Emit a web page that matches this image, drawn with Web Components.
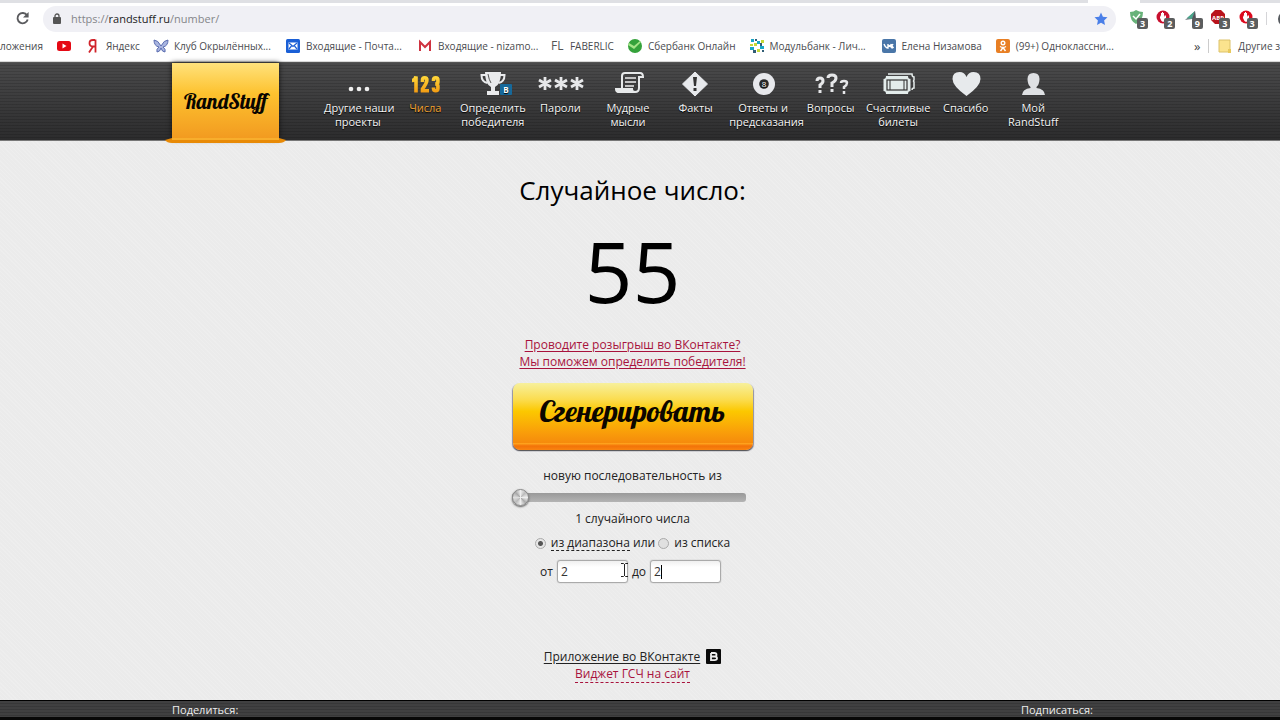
<!DOCTYPE html>
<html lang="ru">
<head>
<meta charset="utf-8">
<title>Случайное число — RandStuff</title>
<style>
  html, body { margin: 0; min-height: 100vh; }
  body {
    font-family: "Open Sans", "Noto Sans", sans-serif;
    color: #222;
    background: #ececec;
    overflow-x: hidden;
  }
</style>
</head>
<body>
<rs-page></rs-page>
<script>
const define = (name, html, setup) => customElements.define(name, class extends HTMLElement {
  connectedCallback() {
    if (this.shadowRoot) return;
    const root = this.attachShadow({ mode: 'open' });
    const t = document.createElement('template');
    t.innerHTML = html;
    root.append(t.content.cloneNode(true));
    if (setup) setup.call(this, root);
  }
});

/* Browser toolbar */
define('ext-icon', `
<style>
  :host { display: block; position: relative; width: 28px; height: 20px; }
  ::slotted(svg) { display: block; width: 16px; height: 16px; }
  b { position: absolute; left: 8px; top: 8px; width: 11px; height: 11px; border-radius: 2px;
      background: #5b5d5e; color: #fff; font: bold 9px/11px "Open Sans", sans-serif; text-align: center; }
</style>
<slot></slot><b></b>`, function (root) { root.querySelector('b').textContent = this.getAttribute('count'); });

define('browser-bar', `
<style>
  :host { display: block; background: #fff; }
  .strip { display: flex; justify-content: flex-end; height: 3px; background: #dfe0e4; }
  .strip i { width: 52px; margin-right: 140px; background: #fff; }
  .tools { display: flex; align-items: center; height: 31px; overflow: hidden; }
  button { border: 0; padding: 0; background: none; width: 43px; height: 24px; }
  button svg { display: block; margin-left: 15px; }
  .omni { flex: 1; min-width: 0; display: flex; align-items: center; height: 26px; border-radius: 13px; background: #f0f0f5; }
  .lock { margin: 0 9px; }
  .url { flex: 1; font-size: 11px; line-height: 16px; color: #85868a; }
  .url span { color: #222; }
  .star { margin-right: 8px; }
  .exts { display: flex; width: 150px; padding: 2px 0 0 13px; box-sizing: border-box; overflow: hidden; }
  .me { width: 14px; height: 17px; overflow: hidden; }
</style>
<div class="strip"><i></i></div>
<div class="tools">
  <button aria-label="Обновить"><svg width="15" height="15" viewBox="0 0 15 15"><path d="M12 4.2A5.2 5.2 0 1 0 12.7 8.6" fill="none" stroke="#5a5b5e" stroke-width="1.9"/><path d="M13.6 1v5.6H8z" fill="#5a5b5e"/></svg></button>
  <div class="omni">
    <svg class="lock" width="10" height="12" viewBox="0 0 10 12"><rect x="1" y="4" width="8" height="7" rx="1" fill="#555"/><path d="M3 5V3a2 2 0 0 1 4 0v2" fill="none" stroke="#555" stroke-width="1.3"/></svg>
    <div class="url">https://<span>randstuff.ru</span>/number/</div>
    <svg class="star" width="14" height="14" viewBox="0 0 14 14"><path d="M7 .5l1.9 4.3 4.6.5-3.4 3.1.9 4.7L7 10.700l-4 2.4.9-4.700L.5 5.300l4.600-.5z" fill="#4a7fe8"/></svg>
  </div>
  <div class="exts">
    <ext-icon count="3"><svg viewBox="0 0 16 16"><path d="M1 2q4 0 6-2 3 2 7 2 0 9-7 12Q1 11 1 2z" fill="#67b279"/><path d="M4 6l3 3 4-5" fill="none" stroke="#fff" stroke-width="1.500"/></svg></ext-icon>
    <ext-icon count="2"><svg viewBox="0 0 16 16"><circle cx="7" cy="7" r="6.500" fill="#c8102e"/><path d="M4 7l1-2v2V3h1v3V2h1v4V3h1v4l1-2 1 1v3q-1 3-3 3-2-1-3-4z" fill="#fff"/></svg></ext-icon>
    <ext-icon count="9"><svg viewBox="0 0 16 16"><path d="M1 10L11 1l1 10-4-2z" fill="#79858a"/><path d="M3 8l8-7-3 8z" fill="#49a68b"/><path d="M8 9l3-8 1 10z" fill="#54545c"/></svg></ext-icon>
    <ext-icon count="3"><svg viewBox="0 0 16 16"><path d="M4 0h6l4 4v6l-4 4H4l-4-4V4z" fill="#b9121b"/><text x="7" y="10" text-anchor="middle" font-family="Open Sans" font-weight="700" font-size="6" fill="#fff">ABP</text></svg></ext-icon>
    <ext-icon count="3"><svg viewBox="0 0 16 16"><circle cx="7" cy="7" r="6.500" fill="#dc0a1e"/><path d="M4 7l1-2v2V3h1v3V2h1v4V3h1v4l1-2 1 1v3q-1 3-3 3-2-1-3-4z" fill="#fff"/></svg></ext-icon>
  </div>
  <svg class="me" viewBox="0 0 14 17"><path d="M.5 2v13" stroke="#d5d5d8"/><circle cx="20" cy="9" r="8" fill="#55595e"/></svg>
</div>`);

/* Bookmarks */
define('book-mark', `
<style>
  :host { display: block; flex: none; }
  a { display: flex; align-items: center; gap: 5px; color: #4a4b4f; text-decoration: none; font-size: 10px; line-height: 16px; white-space: nowrap; }
  ::slotted(svg) { flex: none; width: 16px; height: 16px; }
  span:empty { display: none; }
  :host([cut]) span { width: 98px; }
</style>
<a href="#"><slot></slot><span></span></a>`, function (root) { root.querySelector('span').textContent = this.getAttribute('label') || ''; });

define('bookmarks-bar', `
<style>
  :host { display: flex; justify-content: space-between; height: 28px; padding-bottom: 3px; align-items: center; background: #fff; border-bottom: 1px solid #d8d8d8; box-sizing: border-box; overflow: hidden; }
  nav { display: flex; gap: 13px; align-items: center; }
  .rest { flex: none; width: 86px; gap: 8px; }
  .rest span { font-size: 13px; line-height: 16px; color: #444; }
  .rest i { width: 1px; height: 14px; background: #ccc; }
</style>
<nav>
  <book-mark label="ложения"></book-mark>
  <book-mark><svg viewBox="0 0 16 16"><rect x="1" y="3" width="14" height="10" rx="2.500" fill="#e50914"/><path d="M6.500 5.500v5l4-2.500z" fill="#fff"/></svg></book-mark>
  <book-mark label="Яндекс"><svg viewBox="0 0 16 16"><path d="M10.500 1.500v13M10 2H8Q4.500 2 4.500 5.300 4.500 8.500 8 8.500H10M8 8.500L4 14.500" fill="none" stroke="#d1232a" stroke-width="1.800"/></svg></book-mark>
  <book-mark cut label="Клуб Окрылённых..."><svg viewBox="0 0 16 16"><path d="M8 8Q5 2 1 2q0 6 5 7-3 2-2 5 3 0 4-4 1 4 4 4 1-3-2-5 5-1 5-7-4 0-7 6z" fill="#a9b5e0" stroke="#5b6db0" stroke-width="1"/></svg></book-mark>
  <book-mark cut label="Входящие - Почта..."><svg viewBox="0 0 16 16"><rect x="1" y="1" width="14" height="14" rx="1.500" fill="#1a5fd6"/><rect x="3.500" y="4.500" width="9" height="7" fill="#fff"/><path d="M4 5l4 3.500L12 5M4 11l2.500-3M12 11L9.500 8" fill="none" stroke="#1a5fd6" stroke-width="1.200"/></svg></book-mark>
  <book-mark cut label="Входящие - nizamo..."><svg viewBox="0 0 16 16"><path d="M3 13V4l5 5 5-5v9" fill="none" stroke="#cf3340" stroke-width="2"/></svg></book-mark>
  <book-mark label="FABERLIC"><svg viewBox="0 0 16 16"><text x="2" y="12" font-family="Open Sans" font-size="12" fill="#555">FL</text></svg></book-mark>
  <book-mark label="Сбербанк Онлайн"><svg viewBox="0 0 16 16"><circle cx="8" cy="8" r="7" fill="#35a23b"/><path d="M2 5l5 3 6-5 1 1-7 7-6-4z" fill="#a5e488"/></svg></book-mark>
  <book-mark cut label="Модульбанк - Лич..."><svg viewBox="0 0 16 16"><g fill="#18a7c7"><path d="M2 1h3v3H2zM8 3h3v3H8zM1 9h4v3H1zM11 8h4v3h-4z"/></g><g fill="#c5d936"><path d="M5 5h3v3H5zM12 2h3v3h-3zM8 11h3v3H8zM1 6h3v2H1z"/></g><path d="M11 5h2v3h-2zM4 12h3v3H4zM13 12h2v2h-2zM6 1h2v2H6z" fill="#315d76"/></svg></book-mark>
  <book-mark label="Елена Низамова"><svg viewBox="0 0 16 16"><rect x="1" y="1" width="14" height="14" rx="2" fill="#4a76a8"/><path d="M3 6q1.500 4 4 4V6M7.500 8Q10 8 10.500 6M7.500 8q2.500 0 4 2.500M12 6q-.5 1.500-2 2 1.500.5 2.500 2" fill="none" stroke="#fff" stroke-width="1.400"/></svg></book-mark>
  <book-mark cut label="(99+) Одноклассни..."><svg viewBox="0 0 16 16"><rect x="1" y="1" width="14" height="14" rx="2" fill="#e87f24"/><circle cx="8" cy="5" r="1.800" fill="none" stroke="#fff" stroke-width="1.400"/><path d="M5 8.500q3 2 6 0M8 9.500L5.500 13M8 9.500l2.500 3.500" fill="none" stroke="#fff" stroke-width="1.400"/></svg></book-mark>
</nav>
<nav class="rest"><span>»</span><i></i><book-mark label="Другие з"><svg viewBox="0 0 16 16"><path d="M2 2h11v12H2z" fill="#fbe38e" stroke="#dcc26a"/><path d="M11 11h3v4h-3z" fill="#e8c95c"/></svg></book-mark></nav>`);

/* Site header */
define('nav-item', `
<style>
  :host { display: block; }
  a { display: block; color: #f4f4f4; text-decoration: none; text-align: center; font-size: 11px; line-height: 14px; white-space: nowrap; text-shadow: 0 1px 1px #000; }
  .pic { display: flex; justify-content: center; height: 30px; padding-bottom: 2px; }
  ::slotted(svg) { display: block; width: 48px; height: 30px; }
  :host([active]) a { color: #f0a030; }
</style>
<a href="#"><div class="pic"><slot name="icon"></slot></div><slot></slot></a>`);

define('site-header', `
<style>
  :host { display: block; background: repeating-linear-gradient(#0000 0 2px, #0002 2px 3px), linear-gradient(#4a4a4b, #2c2c2d); border-top: 1px solid #555; border-bottom: 1px solid #777; box-sizing: border-box; height: 79px; padding-right: 15px; }
  .wrap { display: flex; max-width: 921px; margin: auto; }
  .logo { position: relative; flex: none; width: 107px; height: 76px; box-sizing: border-box; text-align: center; color: #090500; text-decoration: none;
    font: 21px/76px "Lobster", "Liberation Serif", serif; background: linear-gradient(#ffe27c, #fdc22f 40%, #f29a20); box-shadow: 0 0 5px #111; }
  .foot { position: absolute; left: -7px; top: 75px; width: 121px; height: 5px; display: block; }
  nav { flex: none; display: grid; grid-template-columns: repeat(11, minmax(0, 1fr)); width: 743px; margin-left: 45px; padding-top: 6px; }
</style>
<div class="wrap">
  <a class="logo" href="#">RandStuff<svg class="foot" viewBox="0 0 121 5"><path d="M7 0h107l7 2q-2 3-7 3H7Q2 5 0 2z" fill="#e88a06"/><path d="M7 0h107v2H7z" fill="#f8ae2c"/></svg></a>
  <nav>
    <nav-item><svg slot="icon" viewBox="0 0 48 30"><g fill="#eee"><circle cx="17" cy="20" r="2.300"/><circle cx="25" cy="20" r="2.300"/><circle cx="33" cy="20" r="2.300"/></g></svg>Другие наши<br>проекты</nav-item>
    <nav-item active><svg slot="icon" viewBox="0 0 48 30"><defs><linearGradient id="g" gradientUnits="userSpaceOnUse" x1="0" y1="7" x2="0" y2="24"><stop stop-color="#ffd83a"/><stop offset="1" stop-color="#f39a12"/></linearGradient></defs><g fill="none" stroke="url(#g)" stroke-width="3.600"><path d="M11 11.500q3 0 4-4v16"/><path d="M21.500 13V11q0-2.300 2.200-2.300t2.200 2.300q0 3-4.400 9v1.800h6.500"/><path d="M32.500 12v-1q0-2.300 2.200-2.300T36.900 11v2q0 2-2.700 2 2.700 0 2.700 2v2.500q0 2.300-2.200 2.300t-2.200-2.300v-1"/></g></svg>Числа</nav-item>
    <nav-item><svg slot="icon" viewBox="0 0 48 30"><g fill="#e9eaec"><path d="M16 3h16q0 12-6 15v4h4v4H18v-4h4v-4q-6-3-6-15z"/></g><path d="M17 6h-4.500q0 7 6 8M31 6h4.500q0 7-6 8" fill="none" stroke="#e9eaec" stroke-width="2"/><path d="M19 5q1 6 3 9" fill="none" stroke="#555" stroke-width="1"/><rect x="31" y="15" width="12" height="11" rx="1" fill="#16699b"/><text x="37" y="24" text-anchor="middle" font-family="Open Sans" font-weight="700" font-size="8" fill="#fff">B</text></svg>Определить<br>победителя</nav-item>
    <nav-item><svg slot="icon" viewBox="0 0 48 30"><path d="M9 8v13M3 11l12 7M15 11l-12 7M25 8v13M19 11l12 7M31 11l-12 7M41 8v13M35 11l12 7M47 11l-12 7" fill="none" stroke="#e6e7e9" stroke-width="2.800"/></svg>Пароли</nav-item>
    <nav-item><svg slot="icon" viewBox="0 0 48 30"><path d="M18 19V7q0-3 3-3h15q3 0 3 4h-4v11q0 4-4 4H15q-3 0-3-3h16q0 3 3 3" fill="none" stroke="#e7e9ea" stroke-width="2"/><path d="M12 20h16l2 4H15q-3 0-3-4z" fill="#e7e9ea"/><path d="M21 9h11M21 13h11M21 17h9" stroke="#eee" stroke-width="1.300"/></svg>Мудрые<br>мысли</nav-item>
    <nav-item><svg slot="icon" viewBox="0 0 48 30"><path d="M24 3l12.500 12L24 27 11.500 15z" fill="#e7e9ec" stroke="#e7e9ec" stroke-linejoin="round"/><path d="M22 8h4l-1 9h-2zM22.500 19h3v3h-3z" fill="#333"/></svg>Факты</nav-item>
    <nav-item><svg slot="icon" viewBox="0 0 48 30"><circle cx="25" cy="15" r="11" fill="#e7e8ec"/><circle cx="25" cy="15" r="4.800" fill="#292929"/><text x="25" y="18" text-anchor="middle" font-family="Open Sans" font-size="8" fill="#fff">8</text></svg>Ответы и<br>предсказания</nav-item>
    <nav-item><svg slot="icon" viewBox="0 0 48 30"><g fill="none" stroke="#e6e7e9" stroke-width="3"><path d="M10 12q0-3 3-3t3 3q0 2-3 4v3M13 21v3"/><path d="M21 9q0-3 4-3t4 3q0 3-4 5v4M25 20v3"/><path d="M34 14q0-2 3-2t3 2-3 4v2M37 22v3" stroke-width="2.500"/></g></svg>Вопросы</nav-item>
    <nav-item><svg slot="icon" viewBox="0 0 48 30"><path d="M14 5h24q0 3 2 3v3q-1 1 0 2v6q-2 0-2 2" fill="none" stroke="#e5eceb" stroke-width="1.500"/><path d="M12 7h22q0 3 2.500 3v12q-2.500 0-2.500 3H12q0-3-2.500-3V10q2.500 0 2.500-3z" fill="#e3eceb"/><rect x="13" y="11" width="20" height="10" fill="#e3eceb" stroke="#333" stroke-width="1.200"/><path d="M16 11v10M30 11v10" stroke="#333"/></svg>Счастливые<br>билеты</nav-item>
    <nav-item><svg slot="icon" viewBox="0 0 48 30"><path d="M24.500 27Q10.500 17 10.500 10q0-7 7-7 5 0 7 5 2-5 7-5 7 0 7 7 0 7-14 17z" fill="#e7eaec"/></svg>Спасибо</nav-item>
    <nav-item><svg slot="icon" viewBox="0 0 48 30"><path d="M24.500 4q6 0 6 6 0 5-3 8v1q8 1 8.500 7H13q.5-6 8.500-7v-1q-3-3-3-8 0-6 6-6z" fill="#dfe1e4"/></svg>Мой<br>RandStuff</nav-item>
  </nav>
</div>`);

/* Generator form */
define('number-generator', `
<style>
  :host { display: flex; flex-direction: column; align-items: center; padding: 29px 15px 0 0; font-size: 12px; line-height: 17px; text-align: center; }
  h1 { margin: 0; font-weight: 400; font-size: 26px; line-height: 40px; color: #000; }
  output { font-size: 84px; line-height: 122px; color: #000; }
  a.vk { color: #a8123c; margin: 4px 0 0; text-underline-offset: 2px; }
  .gen { width: 240px; height: 67px; margin: 13px 0 0; padding: 0 0 11px; border: 0; border-radius: 7px; color: #0b0600;
    font: 30px/40px "Lobster", "Liberation Serif", serif;
    background: linear-gradient(#f7f09c, #fbdc4e 25%, #fcc800 42%, #f99c0a 75%, #f58a0c 90%, #ffa51e 90%, #f37208 94%, #f98410);
    box-shadow: 0 1px 1px #555, -1px 1px 1px #99a, 1px 1px 1px #99a; }
  .count { display: flex; flex-direction: column; margin-top: 17px; width: 242px; }
  input[type=range] { appearance: none; width: 234px; height: 18px; margin: 4px 0; background: none; }
  input[type=range]::-webkit-slider-runnable-track { height: 9px; border-radius: 3px; background: linear-gradient(#999, #b4b4b4); }
  input[type=range]::-webkit-slider-thumb { appearance: none; box-sizing: border-box; width: 17px; height: 17px; margin-top: -4px; border-radius: 50%; border: 1px solid #888; background: conic-gradient(#eee, #bbb, #eee, #aaa, #eee, #bbb, #ddd, #aaa, #eee); box-shadow: 0 1px 2px #555; }
  .mode { display: flex; align-items: center; margin-top: 7px; height: 18px; white-space: pre; }
  .mode span { line-height: 15px; border-bottom: 1px solid #0000; }
  .mode label { display: flex; align-items: center; gap: 5px; }
  .mode .on span { border-bottom: 1px dashed #222; }
  input[type=radio] { appearance: none; width: 11px; height: 11px; margin: 0; border: 1px solid #aaa; border-radius: 50%; background: #e0e0e0; }
  input[type=radio]:checked { background: radial-gradient(#555 0 2px, #e6e6e6 3px); }
  .range { display: flex; align-items: center; gap: 4px; margin: 8px 4px 0 0; }
  .box { position: relative; display: flex; }
  input[type=text] { box-sizing: border-box; width: 71px; height: 23px; padding: 0 3px; border: 1px solid #aaa; border-radius: 3px; background: linear-gradient(#f0f0f0, #fff 6px); box-shadow: 0 0 1px #888; font: 12px/20px "Open Sans", sans-serif; color: #333; outline: 0; }
  .caret { position: absolute; left: 11px; top: 5px; width: 1px; height: 14px; background: #000; }
  .beam { position: absolute; right: 0; top: 2px; }
</style>
<h1>Случайное число:</h1>
<output>55</output>
<a class="vk" href="#">Проводите розыгрыш во ВКонтакте?<br>Мы поможем определить победителя!</a>
<button class="gen">Сгенерировать</button>
<div class="count"><label for="n">новую последовательность из</label><input id="n" type="range" min="1" max="100" value="1"><label for="n">1 случайного числа</label></div>
<div class="mode"><label class="on"><input type="radio" name="m" checked><span>из диапазона</span></label><span> или </span><label><input type="radio" name="m"><span>из списка</span></label></div>
<div class="range"><label for="a">от</label><div class="box"><input id="a" type="text" value="2"><svg class="beam" width="7" height="16" viewBox="0 0 7 16"><path d="M0 1.500h2.500l1 1 1-1H7M0 14.500h2.500l1-1 1 1H7M3.500 2v12" fill="none" stroke="#222"/></svg></div><label for="b">до</label><div class="box"><input id="b" type="text" value="2"><i class="caret"></i></div></div>`);

define('app-links', `
<style>
  :host { display: flex; flex-direction: column; align-items: center; padding: 65px 15px 16px 0; font-size: 12px; line-height: 17px; }
  .row { display: flex; align-items: center; gap: 6px; }
  .row a { color: #222; text-underline-offset: 2px; }
  .w { color: #a8123c; text-decoration: none; line-height: 17px; border-bottom: 1px dashed #a8123c; }
  svg { display: block; }
</style>
<div class="row"><a href="#">Приложение во ВКонтакте</a><svg width="15" height="15" viewBox="0 0 15 15"><rect width="15" height="15" rx="1" fill="#0a0a0a"/><path d="M5 4h3.500q2 0 2 1.700T8.500 7.500H5M8.500 7.500q2.500 0 2.500 1.800T8.500 11.200H5V4" fill="none" stroke="#eee" stroke-width="1.800"/></svg></div>
<a class="w" href="#">Виджет ГСЧ на сайт</a>`);

define('site-footer', `
<style>
  :host { display: block; padding: 1px 15px 0 0; border-top: 1px solid #000; border-bottom: 3px solid #080808; background: repeating-linear-gradient(#0000 0 2px, #0002 2px 3px), #404041; color: #eee; font-size: 11px; line-height: 15px; }
  div { display: flex; justify-content: space-between; max-width: 921px; margin: auto; }
</style>
<div><span>Поделиться:</span><span>Подписаться:</span></div>`);

define('rs-page', `
<style>
  :host { display: flex; flex-direction: column; min-height: 100vh; }
  main { flex: 1; background: repeating-linear-gradient(45deg, #ffffff22 0 1px, #0000 1px 3px), #ebebeb; }
</style>
<browser-bar></browser-bar>
<bookmarks-bar></bookmarks-bar>
<site-header></site-header>
<main><number-generator></number-generator><app-links></app-links></main>
<site-footer></site-footer>`);
</script>
</body>
</html>
